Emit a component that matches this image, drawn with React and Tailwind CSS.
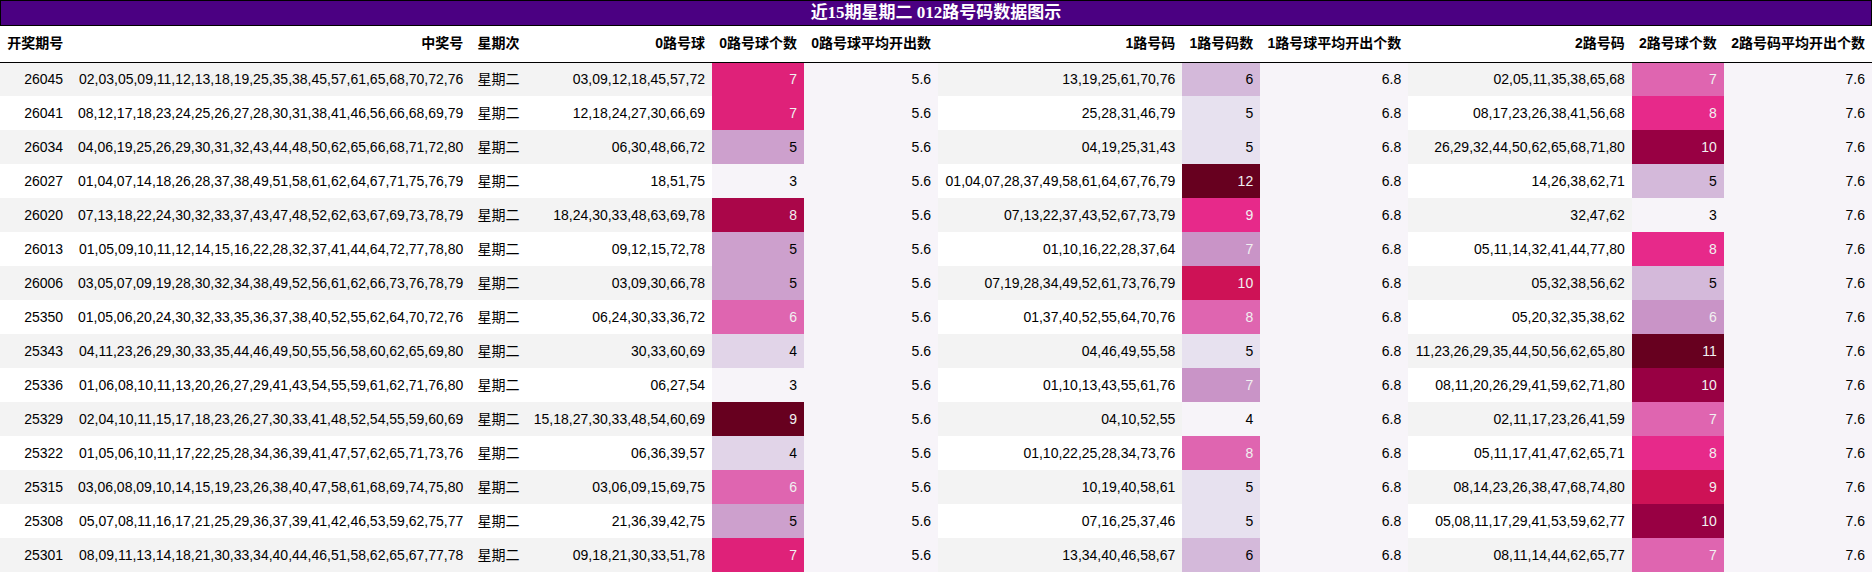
import React from "react";

const rows = [
  ["26045", "02,03,05,09,11,12,13,18,19,25,35,38,45,57,61,65,68,70,72,76", "03,09,12,18,45,57,72", 7, "13,19,25,61,70,76", 6, "02,05,11,35,38,65,68", 7],
  ["26041", "08,12,17,18,23,24,25,26,27,28,30,31,38,41,46,56,66,68,69,79", "12,18,24,27,30,66,69", 7, "25,28,31,46,79", 5, "08,17,23,26,38,41,56,68", 8],
  ["26034", "04,06,19,25,26,29,30,31,32,43,44,48,50,62,65,66,68,71,72,80", "06,30,48,66,72", 5, "04,19,25,31,43", 5, "26,29,32,44,50,62,65,68,71,80", 10],
  ["26027", "01,04,07,14,18,26,28,37,38,49,51,58,61,62,64,67,71,75,76,79", "18,51,75", 3, "01,04,07,28,37,49,58,61,64,67,76,79", 12, "14,26,38,62,71", 5],
  ["26020", "07,13,18,22,24,30,32,33,37,43,47,48,52,62,63,67,69,73,78,79", "18,24,30,33,48,63,69,78", 8, "07,13,22,37,43,52,67,73,79", 9, "32,47,62", 3],
  ["26013", "01,05,09,10,11,12,14,15,16,22,28,32,37,41,44,64,72,77,78,80", "09,12,15,72,78", 5, "01,10,16,22,28,37,64", 7, "05,11,14,32,41,44,77,80", 8],
  ["26006", "03,05,07,09,19,28,30,32,34,38,49,52,56,61,62,66,73,76,78,79", "03,09,30,66,78", 5, "07,19,28,34,49,52,61,73,76,79", 10, "05,32,38,56,62", 5],
  ["25350", "01,05,06,20,24,30,32,33,35,36,37,38,40,52,55,62,64,70,72,76", "06,24,30,33,36,72", 6, "01,37,40,52,55,64,70,76", 8, "05,20,32,35,38,62", 6],
  ["25343", "04,11,23,26,29,30,33,35,44,46,49,50,55,56,58,60,62,65,69,80", "30,33,60,69", 4, "04,46,49,55,58", 5, "11,23,26,29,35,44,50,56,62,65,80", 11],
  ["25336", "01,06,08,10,11,13,20,26,27,29,41,43,54,55,59,61,62,71,76,80", "06,27,54", 3, "01,10,13,43,55,61,76", 7, "08,11,20,26,29,41,59,62,71,80", 10],
  ["25329", "02,04,10,11,15,17,18,23,26,27,30,33,41,48,52,54,55,59,60,69", "15,18,27,30,33,48,54,60,69", 9, "04,10,52,55", 4, "02,11,17,23,26,41,59", 7],
  ["25322", "01,05,06,10,11,17,22,25,28,34,36,39,41,47,57,62,65,71,73,76", "06,36,39,57", 4, "01,10,22,25,28,34,73,76", 8, "05,11,17,41,47,62,65,71", 8],
  ["25315", "03,06,08,09,10,14,15,19,23,26,38,40,47,58,61,68,69,74,75,80", "03,06,09,15,69,75", 6, "10,19,40,58,61", 5, "08,14,23,26,38,47,68,74,80", 9],
  ["25308", "05,07,08,11,16,17,21,25,29,36,37,39,41,42,46,53,59,62,75,77", "21,36,39,42,75", 5, "07,16,25,37,46", 5, "05,08,11,17,29,41,53,59,62,77", 10],
  ["25301", "08,09,11,13,14,18,21,30,33,34,40,44,46,51,58,62,65,67,77,78", "09,18,21,30,33,51,78", 7, "13,34,40,46,58,67", 6, "08,11,14,44,62,65,77", 7],
];

// PuRd gradient per column (min..max of that column)
const light = "text-[#f1f1f1]";
const c0 = {
  3: "bg-[#f7f4f9] text-black",
  4: "bg-[#e1d4e8] text-black",
  5: "bg-[#cda0cd] text-black",
  6: "bg-[#df65b0] " + light,
  7: "bg-[#df2179] " + light,
  8: "bg-[#aa0649] " + light,
  9: "bg-[#67001f] " + light,
};
const c1 = {
  4: "bg-[#f7f4f9] text-black",
  5: "bg-[#e7e1ef] text-black",
  6: "bg-[#d4b9da] text-black",
  7: "bg-[#c994c7] " + light,
  8: "bg-[#df65b0] " + light,
  9: "bg-[#e7298a] " + light,
  10: "bg-[#ce1256] " + light,
  11: "bg-[#980043] " + light,
  12: "bg-[#67001f] " + light,
};
const c2 = {
  3: "bg-[#f7f4f9] text-black",
  4: "bg-[#e7e1ef] text-black",
  5: "bg-[#d4b9da] text-black",
  6: "bg-[#c994c7] " + light,
  7: "bg-[#df65b0] " + light,
  8: "bg-[#e7298a] " + light,
  9: "bg-[#ce1256] " + light,
  10: "bg-[#980043] " + light,
  11: "bg-[#67001f] " + light,
};

const headers = [
  "开奖期号", "中奖号", "星期次", "0路号球", "0路号球个数", "0路号球平均开出数",
  "1路号码", "1路号码数", "1路号球平均开出个数", "2路号码", "2路号球个数", "2路号码平均开出个数",
];

const avg = "bg-[#f7f4f9]";

export default function App() {
  return (
    <div className="w-[1872px] bg-white text-black font-['Liberation_Sans','Noto_Sans_CJK_SC',sans-serif] text-[14px]">
      <div className="h-[26px] border border-black bg-[#4b0082] text-center text-white text-[17px] leading-[24px] font-bold font-['Liberation_Serif','Noto_Sans_CJK_SC',serif]">
        近15期星期二 012路号码数据图示
      </div>
      <table className="w-full border-collapse whitespace-nowrap">
        <thead>
          <tr className="h-[36px] border-b border-black">
            {headers.map((h) => (
              <th key={h} className="px-[7px] py-0 text-right font-bold">{h}</th>
            ))}
          </tr>
        </thead>
        <tbody>
          {rows.map((r, i) => (
            <tr key={r[0]} className={"h-[34px] " + (i % 2 === 0 ? "bg-[#f3f3f3]" : "bg-white")}>
              <td className="px-[7px] py-0 text-right">{r[0]}</td>
              <td className="px-[7px] py-0 text-right">{r[1]}</td>
              <td className="px-[7px] py-0 text-right">星期二</td>
              <td className="px-[7px] py-0 text-right">{r[2]}</td>
              <td className={"px-[7px] py-0 text-right " + c0[r[3]]}>{r[3]}</td>
              <td className={"px-[7px] py-0 text-right " + avg}>5.6</td>
              <td className="px-[7px] py-0 text-right">{r[4]}</td>
              <td className={"px-[7px] py-0 text-right " + c1[r[5]]}>{r[5]}</td>
              <td className={"px-[7px] py-0 text-right " + avg}>6.8</td>
              <td className="px-[7px] py-0 text-right">{r[6]}</td>
              <td className={"px-[7px] py-0 text-right " + c2[r[7]]}>{r[7]}</td>
              <td className={"px-[7px] py-0 text-right " + avg}>7.6</td>
            </tr>
          ))}
        </tbody>
      </table>
    </div>
  );
}
